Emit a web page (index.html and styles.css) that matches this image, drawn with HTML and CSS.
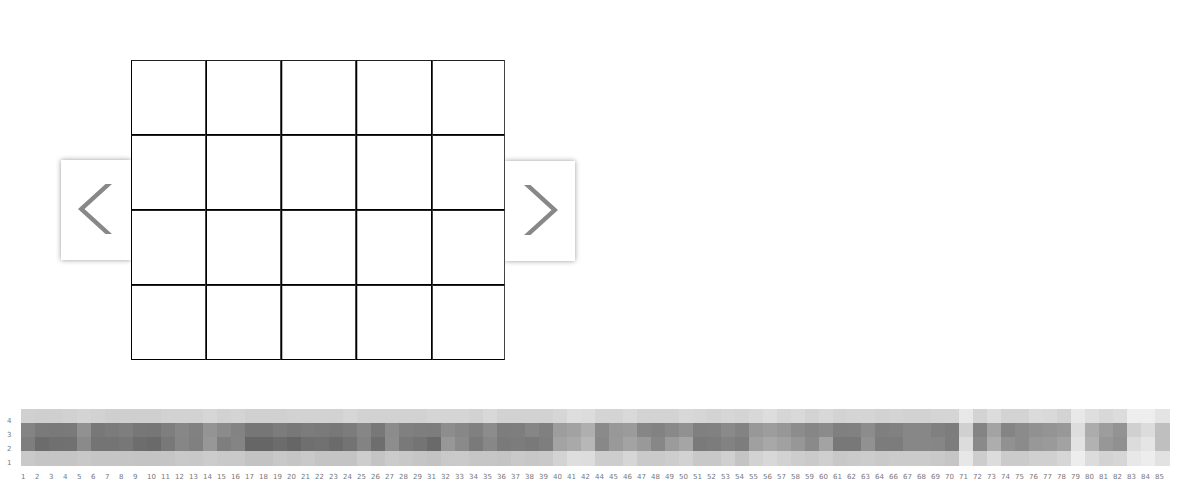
FILE: index.html
```html
<!DOCTYPE html>
<html lang="en">
<head>
<meta charset="utf-8">
<title>Grid viewer</title>
<link rel="stylesheet" href="styles.css">
</head>
<body>
<main class="viewer">
  <button class="pager pager-prev" type="button" aria-label="Previous">
    <svg width="34" height="50" viewBox="0 0 34 50" aria-hidden="true"><path d="M27.5 0H34L6.5 25 34 50H27.5L0 25Z"/></svg>
  </button>
  <div class="board">
    <div class="cell"></div><div class="cell"></div><div class="cell"></div><div class="cell"></div><div class="cell"></div>
    <div class="cell"></div><div class="cell"></div><div class="cell"></div><div class="cell"></div><div class="cell"></div>
    <div class="cell"></div><div class="cell"></div><div class="cell"></div><div class="cell"></div><div class="cell"></div>
    <div class="cell"></div><div class="cell"></div><div class="cell"></div><div class="cell"></div><div class="cell"></div>
  </div>
  <button class="pager pager-next" type="button" aria-label="Next">
    <svg width="34" height="50" viewBox="0 0 34 50" aria-hidden="true"><path d="M6.5 0H0L27.5 25 0 50H6.5L34 25Z"/></svg>
  </button>
</main>
<table class="heatmap" id="heatmap"></table>
<script src="heatmap.js"></script>
</body>
</html>
```
FILE: styles.css
```css
body {
  margin: 0;
  background: #fff;
  font-family: "DejaVu Sans", sans-serif;
}

.viewer {
  display: flex;
  align-items: center;
  padding: 60px 60px 49px 61px;
}

.board {
  position: relative;
  z-index: 1;
  display: grid;
  grid-template-columns: 75px 75px 75px 76px 73px;
  grid-auto-rows: 75px;
  background: #fff;
}

.cell {
  border: 1px solid #000;
  border-top-color: #222;
  border-right-color: #444;
}

.cell:nth-child(5n + 3),
.cell:nth-child(5n + 4) {
  box-shadow: inset 1px 0 #bbb;
}

.cell:nth-child(5n + 4) {
  border-right-color: #000;
}

.cell:nth-child(5n) {
  border-left-color: #444;
}

.pager {
  display: flex;
  align-items: center;
  justify-content: center;
  width: 70px;
  height: 100px;
  padding: 0 0 2px;
  border: 0;
  background: #fff;
  box-shadow: 0 0 5px #999;
  cursor: pointer;
}

.pager-prev {
  padding-right: 2px;
}

.pager-next {
  margin-top: 2px;
  padding-left: 2px;
}

.pager svg {
  fill: #888;
}

.heatmap {
  width: calc(100% - 15px);
  table-layout: fixed;
  border-collapse: collapse;
  color: #777;
  font-size: 7px;
  line-height: 8px;
}

.heatmap th,
.heatmap td {
  padding: 0;
  font-weight: normal;
  text-align: left;
}

.heatmap .row-head {
  width: 14px;
  padding-left: 7px;
}

.heatmap tbody tr {
  height: 14px;
}

.heatmap tbody tr:last-child {
  height: 15px;
}

.heatmap tbody th {
  line-height: 3px;
  vertical-align: bottom;
}

.heatmap tbody tr:last-child th {
  padding-bottom: 1px;
}

.heatmap tfoot td {
  padding-top: 7px;
}
```
FILE: heatmap.js
```js
// One two-digit hex grey level per column, listed from the top row down.
const rows = [
  { label: 4, levels: "d0 cf cf d1 d4 d2 cf cf cf cf d2 d2 d2 d6 d2 d4 d0 d0 d0 d2 d2 d2 d2 d6 d2 d2 d2 d2 d2 d5 d5 d5 d2 d8 d2 d2 d2 d2 d6 de dc d4 d4 d9 d3 d3 d3 d8 d6 d3 d6 d4 d8 dd d6 d9 d3 d8 d3 d5 d5 d2 d4 d2 d2 d5 d5 e8 d3 dc d3 d3 db d9 d3 e8 de d8 dc ee ee e4" },
  { label: 3, levels: "84 7a 79 7a 91 78 7b 7e 77 76 7e 87 81 94 8b 83 76 76 7c 78 7c 7a 78 7c 86 78 8c 80 7e 7d 8d 87 80 8c 7d 7e 86 80 9d a2 af 8a 98 9b 86 82 89 91 80 81 8a 83 98 9d 97 8c 86 8b 80 81 8c 7f 81 87 87 80 7d d0 84 a3 84 8b 91 94 98 dd ac 9d 93 d0 dc bf" },
  { label: 2, levels: "7e 6c 70 71 8a 74 74 77 6d 6a 78 86 80 97 7e 84 66 66 6c 66 6f 71 6b 73 83 6e 8d 79 74 6a 97 8a 7a 87 7a 7c 79 7e a3 a9 b7 88 99 a3 99 87 9b a5 7a 7c 82 7d a0 a8 a1 97 8a a3 78 78 91 7c 7c 87 87 86 7d dc 8a ad 91 8b 98 9a a2 e2 b2 97 90 dc e5 bf" },
  { label: 1, levels: "c9 c5 c5 c5 c8 c5 c5 c5 c4 c4 c5 c9 c8 cc c9 c9 c3 c3 c8 c5 c9 c4 c4 c4 cd c4 cb c8 c5 c3 c9 ca c6 c6 c4 c9 c7 c9 d3 de dd cd cd d6 ca ca cd d2 c8 c8 d0 c4 d2 d8 d2 cd ca cf c8 ca cc c9 cb cb cb c9 c5 e7 cd dc cb cb d0 d0 d6 ed dc d3 d6 e8 ed e2" }
];
const skipped = [30, 43, 65];
const table = document.getElementById("heatmap");
const body = table.createTBody();

for (const { label, levels } of rows) {
  const row = body.insertRow();
  const head = document.createElement("th");
  head.scope = "row";
  head.className = "row-head";
  head.textContent = label;
  row.append(head);
  for (const level of levels.split(" ")) {
    row.insertCell().style.backgroundColor = "#" + level.repeat(3);
  }
}

const labels = table.createTFoot().insertRow();
labels.insertCell();
for (let n = 1; n <= 85; n++) {
  if (!skipped.includes(n)) labels.insertCell().textContent = n;
}
```
